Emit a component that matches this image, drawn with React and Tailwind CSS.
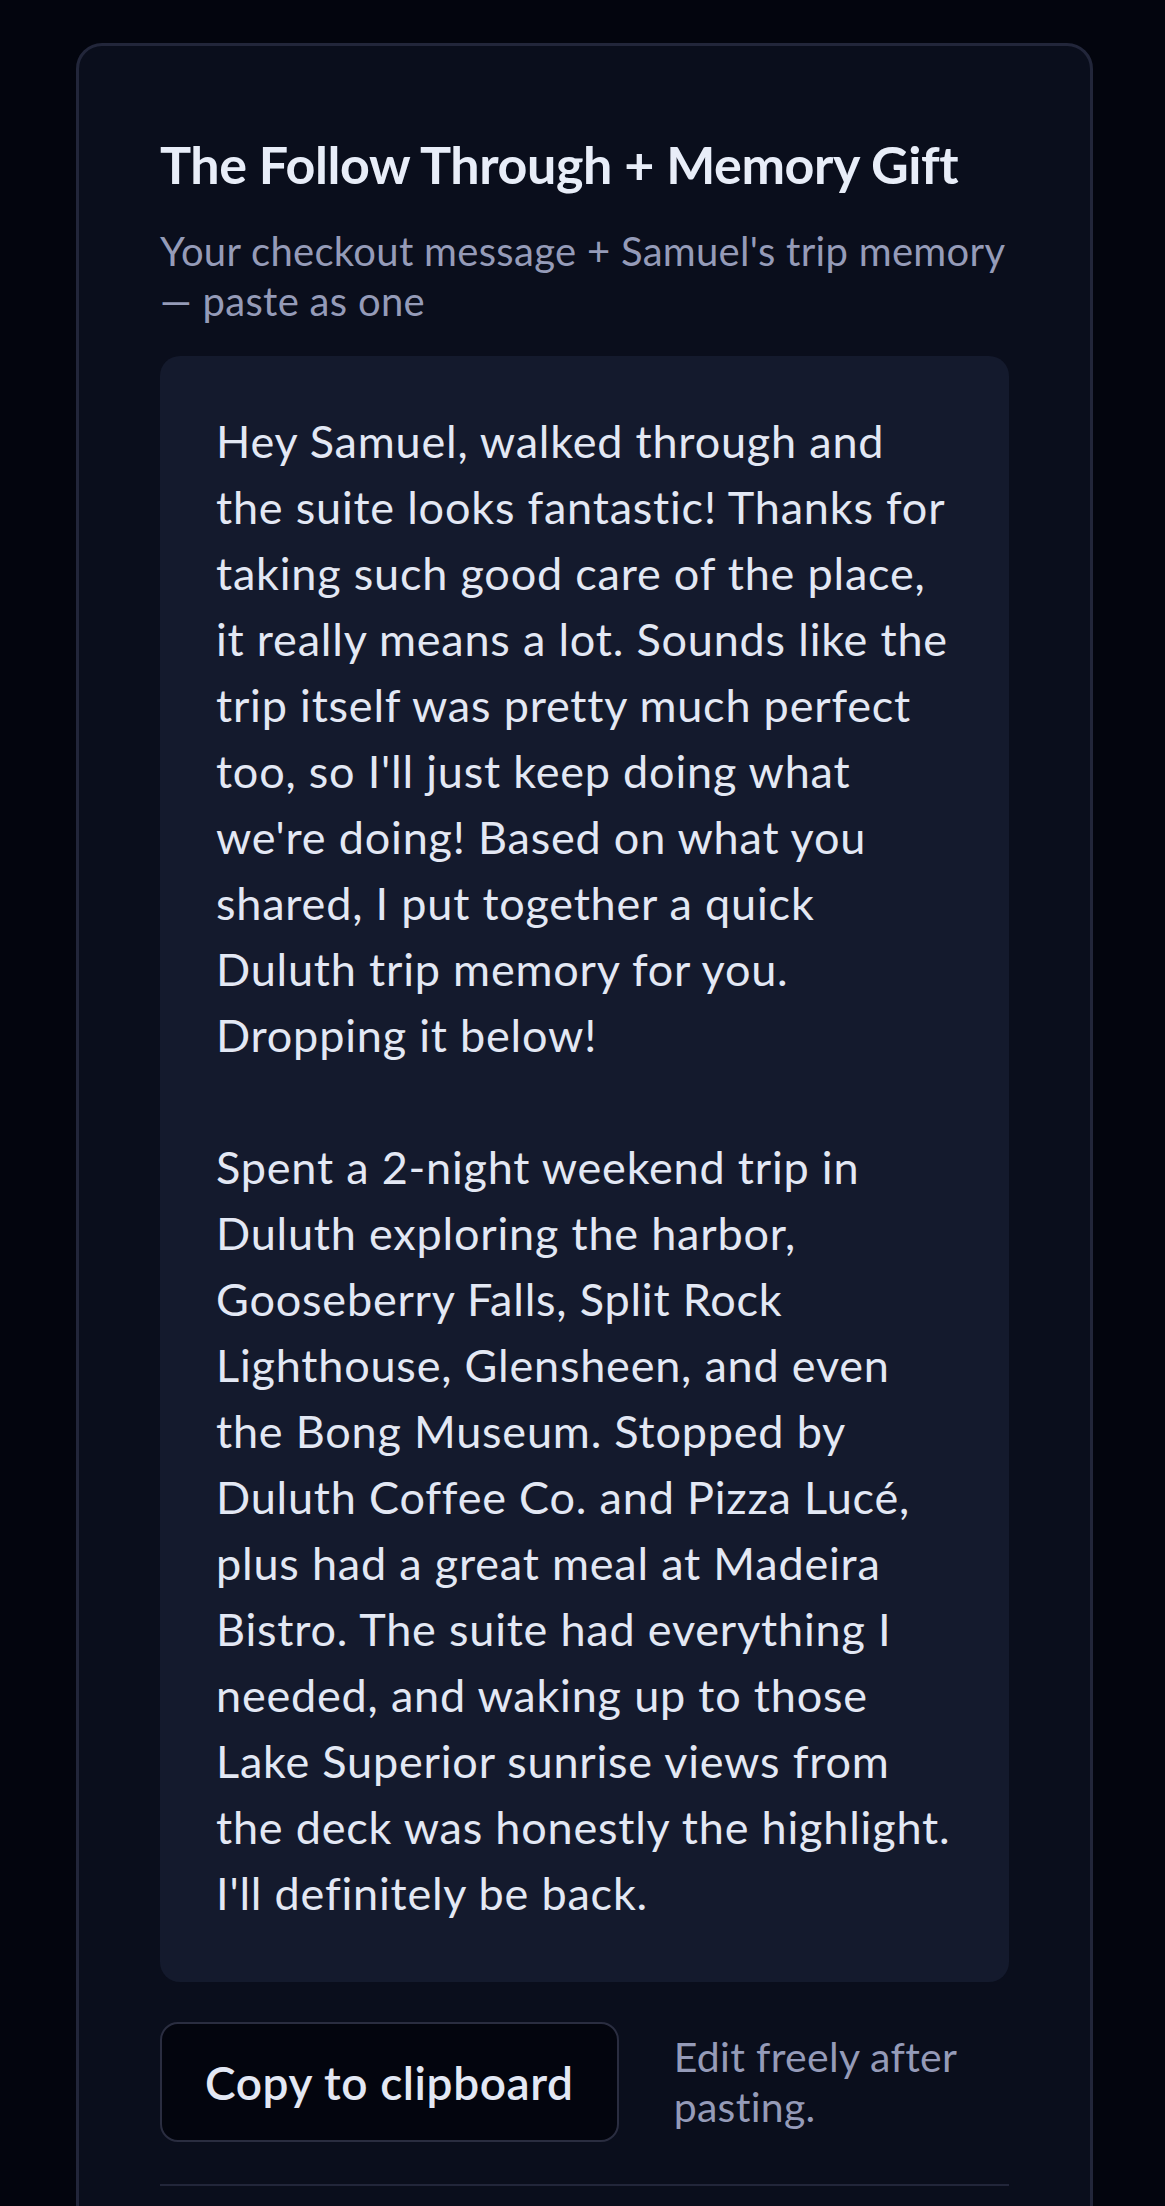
import React from "react";

const message = `Hey Samuel, walked through and the suite looks fantastic! Thanks for taking such good care of the place, it really means a lot. Sounds like the trip itself was pretty much perfect too, so I'll just keep doing what we're doing! Based on what you shared, I put together a quick Duluth trip memory for you. Dropping it below!

Spent a 2-night weekend trip in Duluth exploring the harbor, Gooseberry Falls, Split Rock Lighthouse, Glensheen, and even the Bong Museum. Stopped by Duluth Coffee Co. and Pizza Lucé, plus had a great meal at Madeira Bistro. The suite had everything I needed, and waking up to those Lake Superior sunrise views from the deck was honestly the highlight. I'll definitely be back.`;

const App = () => {
  return (
    <div className="min-h-screen bg-[#03050e] pt-[43px] pl-[76px] pr-[72px] font-['Lato','Liberation_Sans',sans-serif]">
      <section className="rounded-[26px] border-[3px] border-[#22263a] bg-[#0a0e1c] px-[81px] pt-[87px] pb-[80px]">
        <h1 className="text-[52px] font-bold leading-[1.2] tracking-[-0.4px] text-[#e8edf8]">
          The Follow Through + Memory Gift
        </h1>
        <p className="mt-[31px] text-[40px] leading-[50px] tracking-[0.3px] text-[#959bb8]">
          Your checkout message + Samuel's trip memory — paste as one
        </p>

        <div className="mt-[30px] rounded-[20px] bg-[#141a2d] pt-[52px] pb-[56px] pl-[56px] pr-[53px]">
          <p className="whitespace-pre-line text-[45px] leading-[66px] tracking-[0.8px] text-[#e3e8f4]">
            {message}
          </p>
        </div>

        <div className="mt-[40px] flex items-center gap-[55px]">
          <button className="h-[120px] shrink-0 rounded-[18px] border-2 border-[#2a2d40] bg-[#03050e] px-[43px] text-[46px] font-semibold tracking-[0.6px] text-[#e3e8f4]">
            Copy to clipboard
          </button>
          <p className="text-[41px] leading-[50px] tracking-[0.3px] text-[#959bb8]">
            Edit freely after pasting.
          </p>
        </div>

        <div className="mt-[42px] h-[2px] bg-[#22263a]" />
      </section>
    </div>
  );
};

export default App;
